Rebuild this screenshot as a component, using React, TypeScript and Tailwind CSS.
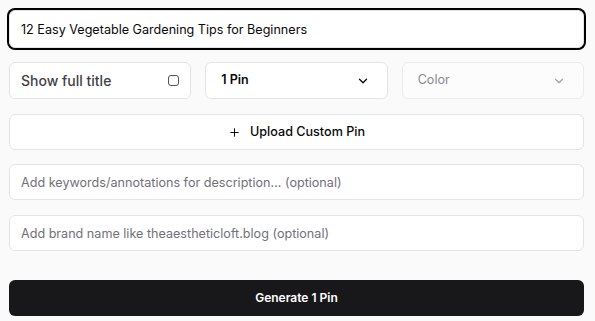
import { ChevronDown, Plus } from "lucide-react";

export default function App() {
  return (
    <div
      className="min-h-screen bg-[#fafafa] pl-[9px] pr-[11px] pt-[10px]"
      style={{ fontFamily: "Inter, 'Noto Sans', sans-serif" }}
    >
      <div className="flex flex-col">
        <input
          defaultValue="12 Easy Vegetable Gardening Tips for Beginners"
          className="h-[38px] w-full rounded-md border border-[#e4e4e7] bg-white px-[11px] text-[12.6px] text-[#09090b] outline-none ring-2 ring-black"
        />

        <div className="mt-[14px] grid grid-cols-3 gap-[14px]">
          <label className="flex h-[37px] items-center justify-between rounded-md border border-[#e4e4e7] bg-white pl-[11px] pr-[11px]">
            <span className="text-[14px] font-medium text-[#3f3f46]">Show full title</span>
            <span className="h-[11px] w-[11px] rounded-[3px] border border-[#52525b] bg-white" />
          </label>
          <button className="flex h-[37px] items-center justify-between rounded-md border border-[#e4e4e7] bg-white pl-[15px] pr-[17px]">
            <span className="text-[12.5px] font-semibold text-[#09090b]">1 Pin</span>
            <ChevronDown className="h-[14px] w-[14px] text-[#09090b]" strokeWidth={2.2} />
          </button>
          <button className="flex h-[37px] items-center justify-between rounded-md border border-[#ececee] bg-[#fcfcfc] pl-[15px] pr-[17px]">
            <span className="text-[12.6px] text-[#8a8a90]">Color</span>
            <ChevronDown className="h-[14px] w-[14px] text-[#a1a1aa]" />
          </button>
        </div>

        <button className="mt-[15px] flex h-[36px] w-full items-center justify-center gap-[9px] rounded-md border border-[#e4e4e7] bg-white">
          <Plus className="h-[13px] w-[13px] text-[#09090b]" strokeWidth={1.8} />
          <span className="text-[12.6px] font-medium text-[#09090b]">Upload Custom Pin</span>
        </button>

        <input
          placeholder="Add keywords/annotations for description... (optional)"
          className="mt-[14px] h-[36px] w-full rounded-md border border-[#e4e4e7] bg-white px-[11px] text-[12.6px] outline-none placeholder:text-[#71717a]"
        />
        <input
          placeholder="Add brand name like theaestheticloft.blog (optional)"
          className="mt-[15px] h-[36px] w-full rounded-md border border-[#e4e4e7] bg-white px-[11px] text-[12.6px] outline-none placeholder:text-[#71717a]"
        />

        <button className="mt-[29px] flex h-[36px] w-full items-center justify-center rounded-md bg-[#18181b] text-[12px] font-semibold text-white">
          Generate 1 Pin
        </button>
      </div>
    </div>
  );
}
